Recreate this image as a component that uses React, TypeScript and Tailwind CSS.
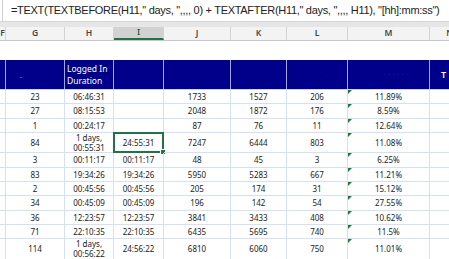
import React from "react";

const cols = [
  { key: "F", w: "w-[6px]" },
  { key: "G", w: "w-[59px]" },
  { key: "H", w: "w-[49px]" },
  { key: "I", w: "w-[50px]" },
  { key: "J", w: "w-[67px]" },
  { key: "K", w: "w-[56px]" },
  { key: "L", w: "w-[61px]" },
  { key: "M", w: "w-[82px]" },
  { key: "N", w: "w-[40px]" },
];

type Row = { tall?: boolean; g: string; h: string; i: string; j: string; k: string; l: string; m: string };

const rows: Row[] = [
  { g: "23", h: "06:46:31", i: "", j: "1733", k: "1527", l: "206", m: "11.89%" },
  { g: "27", h: "08:15:53", i: "", j: "2048", k: "1872", l: "176", m: "8.59%" },
  { g: "1", h: "00:24:17", i: "", j: "87", k: "76", l: "11", m: "12.64%" },
  { tall: true, g: "84", h: "1 days,\n00:55:31", i: "24:55:31", j: "7247", k: "6444", l: "803", m: "11.08%" },
  { g: "3", h: "00:11:17", i: "00:11:17", j: "48", k: "45", l: "3", m: "6.25%" },
  { g: "83", h: "19:34:26", i: "19:34:26", j: "5950", k: "5283", l: "667", m: "11.21%" },
  { g: "2", h: "00:45:56", i: "00:45:56", j: "205", k: "174", l: "31", m: "15.12%" },
  { g: "34", h: "00:45:09", i: "00:45:09", j: "196", k: "142", l: "54", m: "27.55%" },
  { g: "36", h: "12:23:57", i: "12:23:57", j: "3841", k: "3433", l: "408", m: "10.62%" },
  { g: "71", h: "22:10:35", i: "22:10:35", j: "6435", k: "5695", l: "740", m: "11.5%" },
  { tall: true, g: "114", h: "1 days,\n00:56:22", i: "24:56:22", j: "6810", k: "6060", l: "750", m: "11.01%" },
];

function Cell({ w, children, selected, flag }: { w: string; children?: React.ReactNode; selected?: boolean; flag?: boolean }) {
  return (
    <div className={`${w} relative shrink-0 border-r border-b border-[#d5e0f2] flex items-center justify-center text-center whitespace-pre-line leading-[9.5px]`}>
      {flag && (
        <div className="absolute left-0 top-0 w-0 h-0 border-t-[4px] border-r-[4px] border-t-[#1d7a33] border-r-transparent" />
      )}
      {children}
      {selected && (
        <>
          <div className="absolute -left-px -top-px -right-px -bottom-px border-2 border-[#217346]" />
          <div className="absolute -right-[3px] -bottom-[3px] w-[4px] h-[4px] bg-[#217346] border border-white box-content" />
        </>
      )}
    </div>
  );
}

export default function App() {
  return (
    <div className="w-[449px] h-[259px] overflow-hidden bg-white" style={{ fontFamily: '"Noto Sans", "Open Sans", sans-serif' }}>
      {/* formula bar */}
      <div className="h-[21px] bg-white border-l border-[#d0d0d0] ml-[2px] flex items-center pl-[8px] text-[11px] tracking-[-0.3px] text-[#222] whitespace-nowrap" style={{ fontFamily: '"Liberation Sans", Arial, sans-serif' }}>
        =TEXT(TEXTBEFORE(H11," days, ",,,, 0) + TEXTAFTER(H11," days, ",,,, H11), "[hh]:mm:ss")
      </div>
      <div className="h-[6px] bg-[#e6e6e6] border-t border-[#d4d4d4]" />

      {/* column letters */}
      <div className="flex h-[14px] bg-[#f3f3f3] border-b border-[#c8c8c8] text-[8.5px] font-semibold text-[#444]">
        {cols.map((c) => (
          <div
            key={c.key}
            className={`${c.w} shrink-0 flex items-center justify-center overflow-hidden border-r border-[#d4d4d4] ${c.key === "I" ? "bg-[#d2d2d2] border-b-2 border-b-[#217346] text-[#1e5e3a]" : ""}`}
          >
            {c.key}
          </div>
        ))}
      </div>

      <div className="h-[19px]" />

      {/* table header */}
      <div className="flex h-[30px] bg-[#00008b] text-white text-[8.5px] border-b border-[#c9d3ee]">
        {cols.map((c) => (
          <div key={c.key} className={`${c.w} shrink-0 border-r border-[#9fa6dc] relative overflow-hidden`}>
            {c.key === "G" && <span className="absolute left-[14px] top-[12px] text-[#8b8bd0] text-[7px]">-</span>}
            {c.key === "H" && <div className="pl-[2px] pt-[3px] leading-[12px]">Logged In<br />Duration</div>}
            {c.key === "L" && <span className="absolute left-[38px] top-[10px] text-[#1c1ca8] text-[6px]">.</span>}
            {c.key === "M" && <span className="absolute left-[36px] top-[10px] text-[#3434a8] text-[5px] tracking-[1px]">. . . .  . .</span>}
            {c.key === "N" && <span className="absolute left-[11px] top-[8px] text-[9px] font-semibold">T</span>}
          </div>
        ))}
      </div>

      {/* data rows */}
      <div className="text-[8px] text-[#222]">
        {rows.map((r, idx) => (
          <div key={idx} className={`flex ${r.tall ? "h-[20.33px]" : "h-[14.33px]"}`}>
            <Cell w="w-[6px]" />
            <Cell w="w-[59px]">{r.g}</Cell>
            <Cell w="w-[49px]">{r.h}</Cell>
            <Cell w="w-[50px]" selected={idx === 3}>{r.i}</Cell>
            <Cell w="w-[67px]">{r.j}</Cell>
            <Cell w="w-[56px]">{r.k}</Cell>
            <Cell w="w-[61px]">{r.l}</Cell>
            <Cell w="w-[82px]" flag>{r.m}</Cell>
            <Cell w="w-[40px]" />
          </div>
        ))}
      </div>
    </div>
  );
}
